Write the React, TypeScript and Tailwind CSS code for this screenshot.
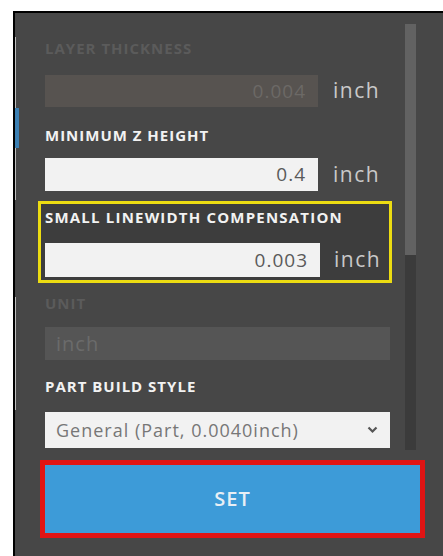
import React from "react";

const font = { fontFamily: '"Open Sans", "Liberation Sans", sans-serif' };

function Label({ children, dim }: { children: React.ReactNode; dim?: boolean }) {
  return (
    <div
      className={
        "pl-[7px] text-[15px] leading-[18px] font-bold tracking-[1px] uppercase " +
        (dim ? "text-[#5b5b5b]" : "text-[#f2f2f2]")
      }
    >
      {children}
    </div>
  );
}

function NumberField({
  value,
  disabled,
  height,
}: {
  value: string;
  disabled?: boolean;
  height: string;
}) {
  return (
    <div className="flex items-center">
      <div
        className={
          "ml-[7px] w-[273px] flex items-center justify-end pr-[12px] text-[19px] tracking-[1px] " +
          height +
          (disabled ? " bg-[#575350] text-[#6c6966]" : " bg-[#f2f2f2] text-[#5a5a5a]")
        }
      >
        {value}
      </div>
      <div className="ml-[15px] text-[21px] font-medium tracking-[1.5px] text-[#c9c9c9]">inch</div>
    </div>
  );
}

export default function App() {
  return (
    <div className="w-[443px] h-[556px] bg-white pt-[11px] pl-[13px] overflow-hidden" style={font}>
      <div className="h-[545px] border-t-2 border-l-2 border-black bg-[#474747] flex">
        {/* left tab indicator */}
        <div className="w-[4px] flex flex-col">
          <div className="h-[24px]" />
          <div className="h-[71px] w-[1px] bg-[#bdbdbd]" />
          <div className="h-[40px] w-[4px] bg-[#3b7fb2]" />
          <div className="h-[52px] w-[1px] bg-[#bdbdbd]" />
          <div className="h-[97px]" />
          <div className="h-[113px] w-[1px] bg-[#bdbdbd]" />
        </div>

        <div className="flex flex-col">
          <div className="flex">
            {/* form fields */}
            <div className="ml-[19px] w-[354px] flex flex-col pt-[26px]">
              <Label dim>Layer Thickness</Label>
              <div className="mt-[18px]">
                <NumberField value="0.004" disabled height="h-[32px]" />
              </div>

              <div className="mt-[19px]">
                <Label>Minimum Z Height</Label>
              </div>
              <div className="mt-[14px]">
                <NumberField value="0.4" height="h-[33px]" />
              </div>

              <div className="mt-[10px] border-[3px] border-[#ecdc12] bg-[#3d3d3d] pt-[4px] pb-[3px]">
                <div className="pl-[4px] text-[15px] leading-[18px] font-bold tracking-[1.2px] uppercase text-[#f2f2f2]">
                  Small Linewidth Compensation
                </div>
                <div className="mt-[17px] flex items-center">
                  <div className="ml-[4px] w-[275px] h-[34px] bg-[#f2f2f2] flex items-center justify-end pr-[12px] text-[19px] tracking-[1px] text-[#5a5a5a]">
                    0.003
                  </div>
                  <div className="ml-[14px] text-[21px] font-medium tracking-[1.5px] text-[#c9c9c9]">inch</div>
                </div>
              </div>

              <div className="mt-[11px]">
                <Label dim>Unit</Label>
              </div>
              <div className="mt-[15px] ml-[7px] w-[345px] h-[33px] bg-[#555555] flex items-center pl-[11px] text-[20px] tracking-[1px] text-[#6b6b6b]">
                inch
              </div>

              <div className="mt-[17px]">
                <Label>Part Build Style</Label>
              </div>
              <div className="mt-[17px] ml-[7px] w-[345px] h-[36px] bg-[#f2f2f2] flex items-center justify-between pl-[11px] pr-[12px]">
                <span className="text-[18px] tracking-[1px] text-[#777777]">General (Part, 0.0040inch)</span>
                <svg width="11" height="8" viewBox="0 0 11 8" fill="none">
                  <path d="M1.5 1.5 L5.5 5.5 L9.5 1.5" stroke="#555555" strokeWidth="2.2" />
                </svg>
              </div>
            </div>

            {/* scrollbar */}
            <div className="ml-[13px] w-[11px] flex flex-col pt-[11px]">
              <div className="h-[231px] bg-[#626262]" />
              <div className="h-[195px] bg-[#3b3b3b]" />
            </div>
          </div>

          {/* action button */}
          <div className="mt-[10px] ml-[21px] w-[385px] h-[78px] border-[5px] border-[#e01414]">
            <button className="w-full h-full bg-[#3d9bd8] flex items-center justify-center text-[20px] font-semibold tracking-[1px] text-[#e8eff5]">
              SET
            </button>
          </div>
        </div>
      </div>
    </div>
  );
}
